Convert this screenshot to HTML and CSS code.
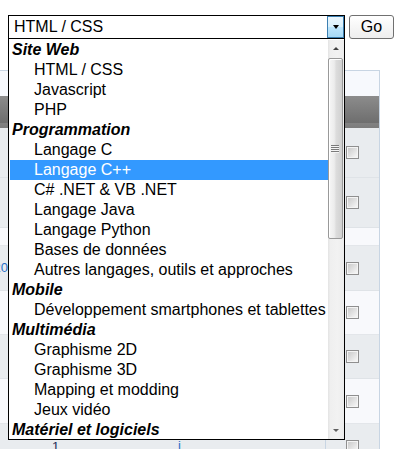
FILE: index.html
```html
<!DOCTYPE html>
<html lang="fr">
<head>
<meta charset="utf-8">
<title>Rubriques</title>
<link rel="stylesheet" href="styles.css">
</head>
<body>
<div class="page">
  <div class="toolbar">
    <div class="select">
      <span class="select-value">HTML / CSS</span>
      <span class="select-btn"><span class="tri-down"></span></span>
      <div class="list">
        <div class="items">
          <div class="group">Site Web</div>
          <div class="opt">HTML / CSS</div>
          <div class="opt">Javascript</div>
          <div class="opt">PHP</div>
          <div class="group">Programmation</div>
          <div class="opt">Langage C</div>
          <div class="opt selected">Langage C++</div>
          <div class="opt">C# .NET &amp; VB .NET</div>
          <div class="opt">Langage Java</div>
          <div class="opt">Langage Python</div>
          <div class="opt">Bases de données</div>
          <div class="opt">Autres langages, outils et approches</div>
          <div class="group">Mobile</div>
          <div class="opt">Développement smartphones et tablettes</div>
          <div class="group">Multimédia</div>
          <div class="opt">Graphisme 2D</div>
          <div class="opt">Graphisme 3D</div>
          <div class="opt">Mapping et modding</div>
          <div class="opt">Jeux vidéo</div>
          <div class="group">Matériel et logiciels</div>
        </div>
        <div class="scrollbar">
          <div class="sb-btn"><span class="tri-up"></span></div>
          <div class="sb-thumb"><span class="grip"></span></div>
          <div class="sb-track"></div>
          <div class="sb-btn"><span class="tri-down small"></span></div>
        </div>
      </div>
    </div>
    <button class="go" type="button">Go</button>
  </div>

  <div class="table">
    <div class="row r-top"></div>
    <div class="row r-head"></div>
    <div class="row gray h49"><div class="cell-main"></div><div class="cell-cb"><span class="cb"></span></div></div>
    <div class="row gray h49"><div class="cell-main"></div><div class="cell-cb"><span class="cb"></span></div></div>
    <div class="row light h18"><div class="cell-main"></div><div class="cell-cb"></div></div>
    <div class="row gray h44"><div class="cell-main"><span class="num">120</span></div><div class="cell-cb"><span class="cb"></span></div></div>
    <div class="row light h43"><div class="cell-main"></div><div class="cell-cb"><span class="cb"></span></div></div>
    <div class="row gray h43"><div class="cell-main"></div><div class="cell-cb"><span class="cb"></span></div></div>
    <div class="row light h44"><div class="cell-main"></div><div class="cell-cb"><span class="cb"></span></div></div>
    <div class="row gray h44 last"><div class="cell-main"><span class="c1">1</span><span class="c2">j</span></div><div class="cell-cb"><span class="cb"></span></div></div>
  </div>
</div>
</body>
</html>
```

FILE: styles.css
```css
html, body {
  margin: 0;
  padding: 0;
  background: #fff;
}

body {
  font-family: "Liberation Sans", Arial, sans-serif;
  font-size: 16px;
  color: #000;
}

.page {
  position: relative;
  width: 404px;
  height: 449px;
  overflow: hidden;
}

/* ---------- toolbar ---------- */
.toolbar {
  display: flex;
  gap: 4px;
  padding: 15px 0 0 8px;
  position: relative;
  z-index: 2;
}

.select {
  position: relative;
  box-sizing: border-box;
  width: 337px;
  height: 24px;
  border: 1px solid #000;
  background: #fff;
  display: flex;
  align-items: stretch;
}

.select-value {
  flex: 1;
  padding-left: 5px;
  line-height: 22px;
  white-space: nowrap;
}

.select-btn {
  box-sizing: border-box;
  width: 17px;
  border: 1px solid #3c7fb1;
  background: linear-gradient(#eaf6fd 0%, #d9f0fc 50%, #bee6fd 50%, #a7d9f5 100%);
  display: flex;
  align-items: center;
  justify-content: center;
}

.tri-down {
  width: 0;
  height: 0;
  border-left: 3.5px solid transparent;
  border-right: 3.5px solid transparent;
  border-top: 4px solid #000;
}

.tri-down.small {
  border-left-width: 3px;
  border-right-width: 3px;
  border-top: 3px solid #606060;
}

.tri-up {
  width: 0;
  height: 0;
  border-left: 3px solid transparent;
  border-right: 3px solid transparent;
  border-bottom: 3px solid #404040;
}

.go {
  box-sizing: border-box;
  width: 45px;
  height: 24px;
  margin: 0;
  padding: 0;
  border: 1px solid #707070;
  border-radius: 3px;
  background: linear-gradient(#ffffff, #f6f6f6 50%, #eeeeee 100%);
  font-family: "Liberation Sans", Arial, sans-serif;
  font-size: 16px;
  color: #000;
  line-height: 22px;
}

/* ---------- dropdown list ---------- */
.list {
  position: absolute;
  top: 23px;
  left: -1px;
  box-sizing: border-box;
  width: 337px;
  height: 401px;
  border: 1px solid #000;
  border-top: none;
  padding-top: 1px;
  background: #fff;
  display: flex;
  overflow: hidden;
}

.items {
  width: 318px;
  margin-left: 1px;
  overflow: hidden;
}

.group,
.opt {
  height: 20px;
  line-height: 20px;
  white-space: nowrap;
}

.group {
  padding-left: 2px;
  font-weight: bold;
  font-style: italic;
}

.opt {
  padding-left: 24px;
}

.opt.selected {
  background: #3399ff;
  color: #fff;
}

.scrollbar {
  width: 16px;
  display: flex;
  flex-direction: column;
  background: linear-gradient(to right, #e3e3e3 0%, #efefef 15%, #f2f2f2 60%, #ececec 100%);
}

.sb-btn {
  height: 17px;
  display: flex;
  align-items: center;
  justify-content: center;
}

.sb-thumb {
  box-sizing: border-box;
  height: 181px;
  width: 15px;
  margin-top: 1px;
  border: 1px solid #999;
  border-radius: 2px;
  background: linear-gradient(to right, #f6f6f6 0%, #ececec 40%, #dcdcdc 55%, #d0d0d0 100%);
  box-shadow: inset 1px 1px 0 #fff;
  display: flex;
  align-items: center;
  justify-content: center;
}

.grip {
  width: 8px;
  height: 8px;
  background: repeating-linear-gradient(#7a7a7a 0, #7a7a7a 1px, #f4f4f4 1px, #f4f4f4 2px);
  margin-left: -1px;
}

.sb-track {
  flex: 1;
}

/* ---------- background table ---------- */
.table {
  box-sizing: border-box;
  width: 380px;
  margin-top: 31px;
  border-top: 1px solid #c8d5e3;
  border-right: 1px solid #c8d5e3;
  position: relative;
  z-index: 1;
}

.row {
  display: flex;
}

.r-top {
  height: 25px;
  background: #f7f9fd;
}

.r-head {
  height: 32px;
  background: linear-gradient(#8c8c8c 0%, #6e6e6e 84%, #828282 84%, #7c7c7c 100%);
}

.gray {
  background: #e9ecef;
  border-bottom: 1px solid #dfe3e7;
}

.light {
  background: #f8f9fc;
  border-bottom: 1px solid #e3e6ea;
}

.h49 { height: 49px; }
.h44 { height: 44px; }
.h43 { height: 43px; }
.h18 { height: 17px; }

.cell-main {
  flex: 1;
  position: relative;
  overflow: hidden;
}

.cell-cb {
  width: 53px;
  border-left: 1px solid #c8d5e3;
  display: flex;
  align-items: center;
  justify-content: center;
}

.cb {
  box-sizing: border-box;
  width: 13px;
  height: 13px;
  border: 1px solid #8f8f8f;
  padding: 1px;
  background: linear-gradient(135deg, #cbcbcb, #f6f6f6) content-box, #f4f4f4;
}

.num {
  position: absolute;
  right: calc(100% - 8px);
  top: 14px;
  font-size: 13px;
  color: #2a70c8;
  white-space: nowrap;
}

.c1, .c2 {
  position: absolute;
  top: 15px;
  font-size: 13px;
}

.c1 { left: 52px; color: #1c2a5a; }
.c2 { left: 178px; color: #2a70c8; top: 14px; }
```
